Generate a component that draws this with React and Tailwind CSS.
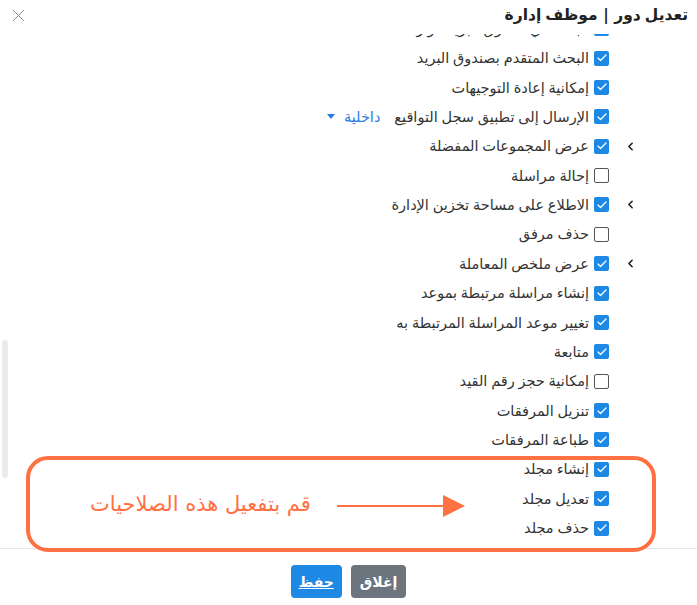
import { Check, ChevronLeft, X } from "lucide-react";

const items = [
    { label: "البحث في صندوق البريد الوارد", checked: true },
    { label: "البحث المتقدم بصندوق البريد", checked: true },
    { label: "إمكانية إعادة التوجيهات", checked: true },
    { label: "الإرسال إلى تطبيق سجل التواقيع", checked: true, select: "داخلية" },
    { label: "عرض المجموعات المفضلة", checked: true, expand: true },
    { label: "إحالة مراسلة", checked: false },
    { label: "الاطلاع على مساحة تخزين الإدارة", checked: true, expand: true },
    { label: "حذف مرفق", checked: false },
    { label: "عرض ملخص المعاملة", checked: true, expand: true },
    { label: "إنشاء مراسلة مرتبطة بموعد", checked: true },
    { label: "تغيير موعد المراسلة المرتبطة به", checked: true },
    { label: "متابعة", checked: true },
    { label: "إمكانية حجز رقم القيد", checked: false },
    { label: "تنزيل المرفقات", checked: true },
    { label: "طباعة المرفقات", checked: true },
    { label: "إنشاء مجلد", checked: true },
    { label: "تعديل مجلد", checked: true },
    { label: "حذف مجلد", checked: true },
];

const Box = ({ checked }) =>
    checked ? (
        <span className="flex h-[15px] w-[15px] items-center justify-center rounded-[2px] bg-[#1e88e5]">
            <Check size={12} strokeWidth={2.5} color="#fff" />
        </span>
    ) : (
        <span className="block h-[15px] w-[15px] rounded-[2px] border-[1.5px] border-[#555] bg-white" />
    );

const Row = ({ item }) => (
    <div className="flex h-[29.375px] items-center pr-[57px]">
        <span className="flex w-[20px] justify-center">
            {item.expand && (
                <ChevronLeft size={13} strokeWidth={3} color="#222" />
            )}
        </span>
        <span className="mr-[11px] block">
            <Box checked={item.checked} />
        </span>
        <span className="mr-[5px] text-[14.5px] text-[#333]">{item.label}</span>
        {item.select && (
            <span className="mr-[14px] flex items-center gap-[9px] text-[14.5px] text-[#2a7de1]">
                {item.select}
                <span className="block h-0 w-0 border-x-[4px] border-t-[5px] border-x-transparent border-t-[#2a7de1]" />
            </span>
        )}
    </div>
);

export default function App() {
    return (
        <div
            dir="rtl"
            className="relative flex h-[605px] w-[697px] flex-col overflow-hidden bg-white font-['Noto_Sans','DejaVu_Sans',sans-serif]"
        >
            <div className="relative z-10 flex h-[34px] items-start justify-between bg-white pl-[8px] pr-[9px] pt-[2px]">
                <h2 className="text-[15.5px] font-bold leading-[24px] text-[#222]">
                    تعديل دور | موظف إدارة
                </h2>
                <X size={21} strokeWidth={1.1} color="#888" className="mt-[3px]" />
            </div>

            <div className="relative h-[514px] overflow-hidden">
                <div className="mt-[-20px]">
                    {items.map((item, i) => (
                        <Row key={i} item={item} />
                    ))}
                </div>
                {/* scrollbar */}
                <div className="absolute left-[2px] top-[306px] h-[138px] w-[6px] rounded-full bg-[#ebebeb]" />
            </div>

            <div className="h-px bg-[#e6e6e6]" />

            <div className="flex flex-1 justify-center gap-[9px] pt-[16px]">
                <button className="h-[33px] rounded-[4px] bg-[#6c757d] px-[9px] text-[14px] font-semibold text-white">
                    إغلاق
                </button>
                <button className="h-[33px] rounded-[4px] bg-[#1e88e5] px-[8px] text-[14px] font-semibold text-white underline">
                    حفظ
                </button>
            </div>

            {/* annotation */}
            <div
                dir="ltr"
                className="absolute left-[26px] top-[456px] flex h-[96px] w-[630px] items-center rounded-[22px] border-[4px] border-[#ff7043]"
            >
                <span
                    dir="rtl"
                    className="ml-[60px] mt-[2px] text-[21px] text-[#ff7043] font-['DejaVu_Sans',sans-serif]"
                >
                    قم بتفعيل هذه الصلاحيات
                </span>
                <svg width="130" height="24" viewBox="0 0 130 24" className="absolute left-[307px] top-[34px]">
                    <line x1="0" y1="12" x2="108" y2="12" stroke="#ff7043" strokeWidth="2.2" />
                    <polygon points="106,1 128,12 106,23" fill="#ff7043" />
                </svg>
            </div>
        </div>
    );
}
